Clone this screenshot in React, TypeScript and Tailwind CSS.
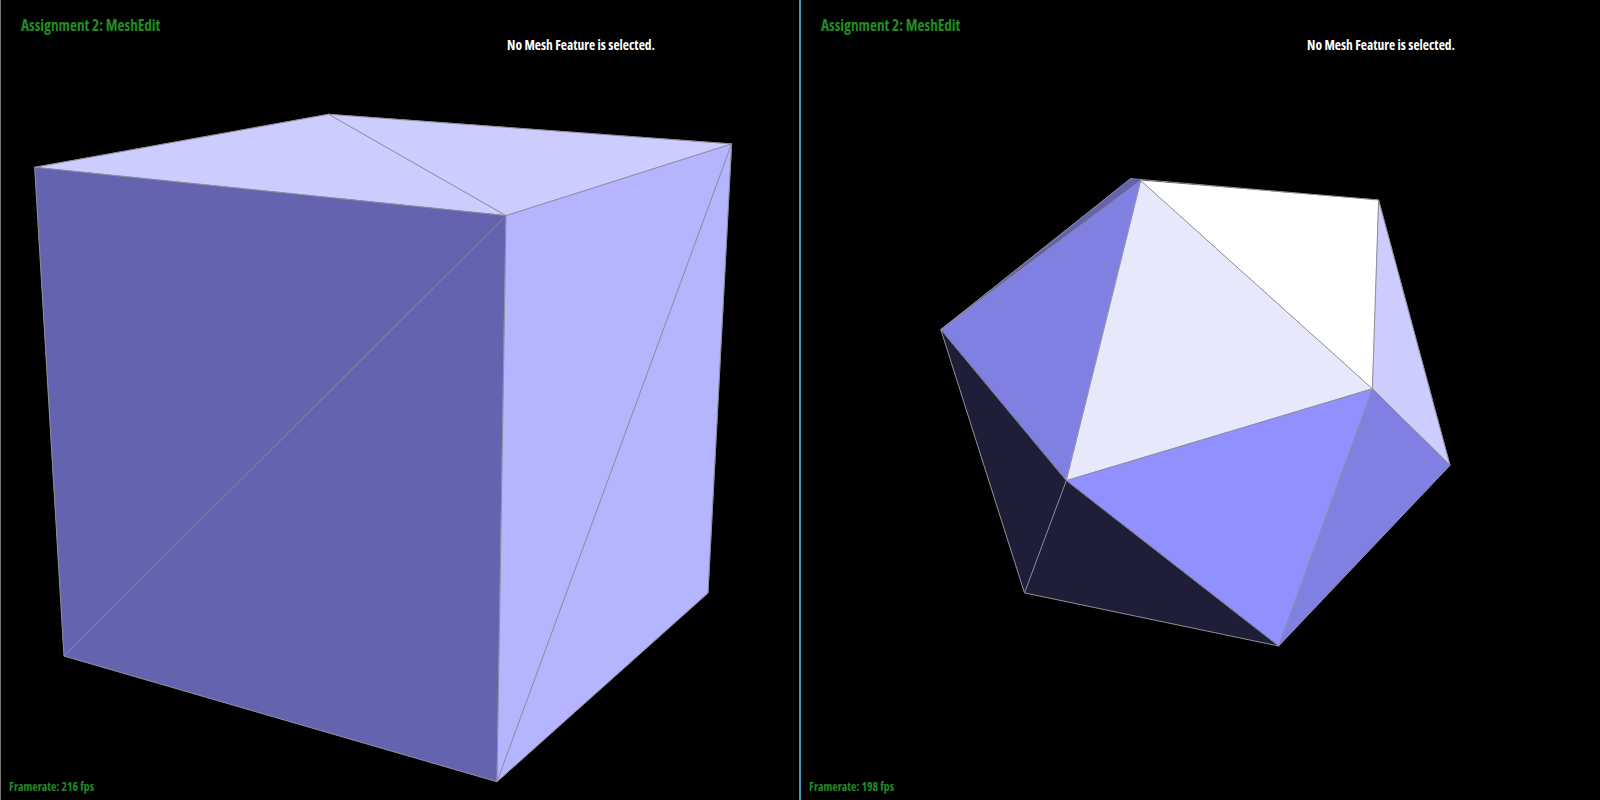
const edge = "#8f8f98";

type Face = { points: string; fill: string };

const cubeFaces: Face[] = [
  { points: "34.7,167.3 328.6,114.3 506,215.6", fill: "#ccccff" },
  { points: "328.6,114.3 731.6,143.9 506,215.6", fill: "#ccccff" },
  { points: "34.7,167.3 506,215.6 64,656", fill: "#6463b0" },
  { points: "506,215.6 497,781.7 64,656", fill: "#6463b0" },
  { points: "506,215.6 731.6,143.9 497,781.7", fill: "#b4b4ff" },
  { points: "731.6,143.9 708,593 497,781.7", fill: "#b4b4ff" },
];

const cubeEdges = [
  "34.7,167.3 328.6,114.3 731.6,143.9 708,593 497,781.7 64,656 34.7,167.3",
  "34.7,167.3 506,215.6 731.6,143.9",
  "328.6,114.3 506,215.6 497,781.7",
  "506,215.6 64,656",
  "731.6,143.9 497,781.7",
];

// right pane coords are local to the pane, x - 800
const icoFaces: Face[] = [
  { points: "330.6,178.6 340.8,180.6 140.8,329.6", fill: "#6463b0" },
  { points: "340.8,180.6 140.8,329.6 266.3,480.6", fill: "#8080e3" },
  { points: "340.8,180.6 266.3,480.6 572.4,388.8", fill: "#e8e8fd" },
  { points: "340.8,180.6 578.6,200 572.4,388.8", fill: "#ffffff" },
  { points: "578.6,200 650,465.3 572.4,388.8", fill: "#ccccff" },
  { points: "572.4,388.8 650,465.3 478.6,646", fill: "#8080e3" },
  { points: "266.3,480.6 572.4,388.8 478.6,646", fill: "#9090ff" },
  { points: "140.8,329.6 266.3,480.6 224.5,592.9", fill: "#1e1e39" },
  { points: "266.3,480.6 478.6,646 224.5,592.9", fill: "#1e1e39" },
];

const icoEdges = [
  "330.6,178.6 578.6,200 650,465.3 478.6,646 224.5,592.9 140.8,329.6 330.6,178.6",
  "340.8,180.6 140.8,329.6 266.3,480.6 340.8,180.6 572.4,388.8 266.3,480.6",
  "578.6,200 572.4,388.8 650,465.3",
  "572.4,388.8 478.6,646 266.3,480.6 224.5,592.9",
];

const Mesh = ({ faces, edges }: { faces: Face[]; edges: string[] }) => (
  <svg className="w-full h-full block" viewBox="0 0 800 800">
    {faces.map((f) => (
      <polygon key={f.points} points={f.points} fill={f.fill} stroke={f.fill} strokeWidth="0.5" />
    ))}
    {edges.map((e) => (
      <polyline key={e} points={e} fill="none" stroke={edge} strokeWidth="1" />
    ))}
  </svg>
);

const Pane = ({ fps, line, faces, edges }: { fps: number; line: string; faces: Face[]; edges: string[] }) => {
  const font = { fontFamily: '"Open Sans", sans-serif', fontStretch: "75%" };
  return (
    <div className={`relative w-[800px] h-[800px] bg-black ${line}`}>
      <Mesh faces={faces} edges={edges} />
      <div style={font} className="absolute inset-0 flex flex-col font-bold whitespace-nowrap">
        <div className="pl-[21px] pt-[14px] text-[15.2px] leading-[22px] text-[#228b22]">
          Assignment 2: MeshEdit
        </div>
        <div className="pl-[507px] -mt-px text-[13.5px] leading-[20px] text-white">
          No Mesh Feature is selected.
        </div>
        <div className="mt-auto pl-[9px] pb-[6px] text-[11.8px] leading-[16px] text-[#228b22]">
          Framerate: {fps} fps
        </div>
      </div>
    </div>
  );
};

export default function App() {
  return (
    <div className="flex w-[1600px] h-[800px] bg-black overflow-hidden">
      <Pane fps={216} line="shadow-[inset_1px_0_0_#777777,inset_-1px_0_0_#3f9ab8]" faces={cubeFaces} edges={cubeEdges} />
      <Pane fps={198} line="shadow-[inset_1px_0_0_#3f9ab8]" faces={icoFaces} edges={icoEdges} />
    </div>
  );
}
